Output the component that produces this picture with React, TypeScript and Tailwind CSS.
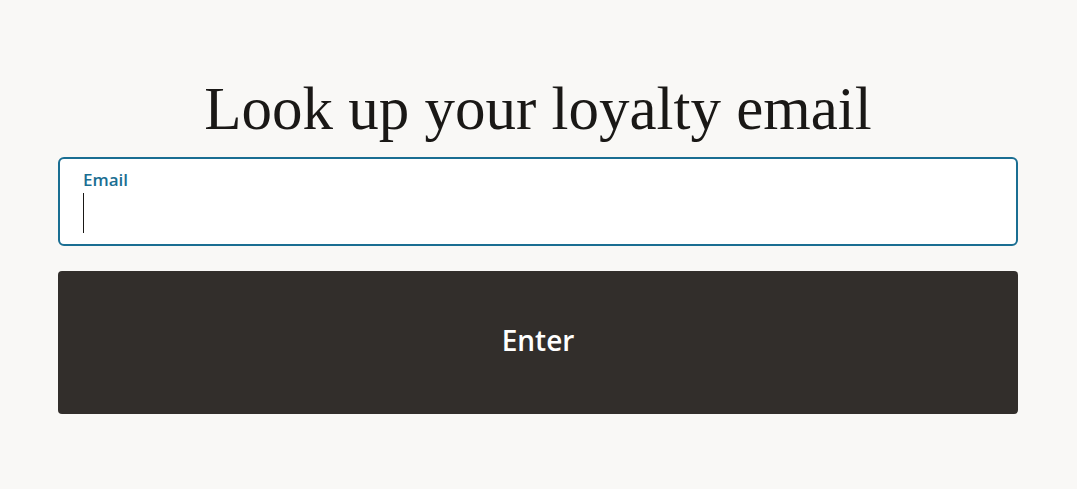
export default function App() {
  return (
    <div className="min-h-[489px] bg-[#f9f8f6] pt-[73px]">
      <div className="ml-[58px] w-[960px]">
        <h1 className="text-center font-['Liberation_Serif',serif] text-[61px] leading-[72px] text-[#1a1816]">
          Look up your loyalty email
        </h1>
        <div className="mt-[12px] flex h-[89px] flex-col rounded-[6px] border-2 border-[#1a6e92] bg-white px-[23px] pt-[10px]">
          <label className="font-['Open_Sans',sans-serif] text-[17px] font-semibold leading-[22px] text-[#1a6e92]">
            Email
          </label>
          <div className="mt-[2px] h-[40px] w-px bg-[#1a1816]" />
        </div>
        <button className="mt-[25px] flex h-[143px] w-full items-center justify-center rounded-[4px] bg-[#322e2b] pb-[5px] font-['Open_Sans',sans-serif] text-[28px] font-semibold text-white">
          Enter
        </button>
      </div>
    </div>
  );
}
